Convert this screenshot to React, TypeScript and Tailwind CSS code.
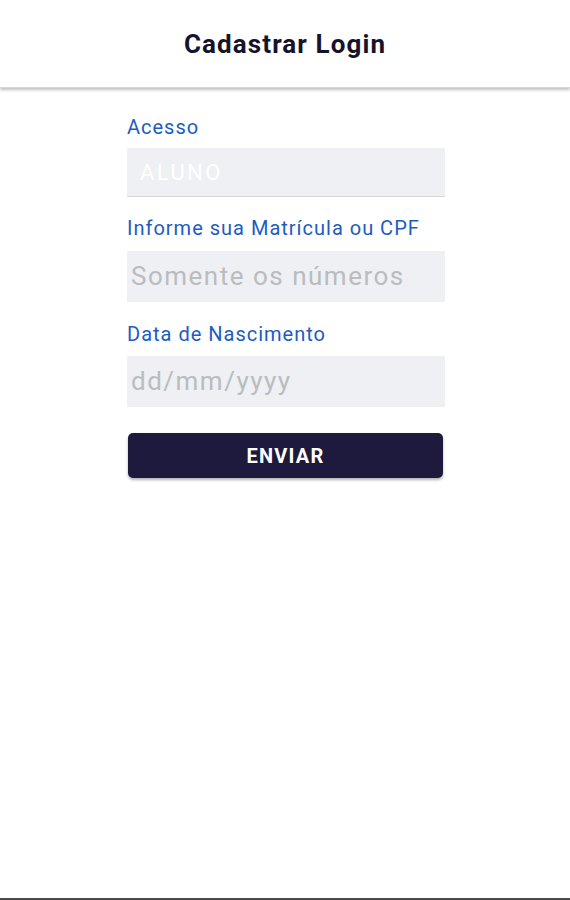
export default function App() {
  const font = { fontFamily: 'Roboto, "Noto Sans", sans-serif' };
  return (
    <div className="w-[570px] h-[900px] bg-white flex flex-col relative" style={font}>
      <header className="h-[88px] flex items-center justify-center bg-white shadow-[0_2px_3px_rgba(0,0,0,0.25)] border-b border-[#d6d6d6] z-10">
        <h1 className="text-[26px] font-bold text-[#15142b] tracking-[1.1px] mt-[2px]">Cadastrar Login</h1>
      </header>
      <main className="flex-1 flex flex-col px-[127px] pt-[25px]">
        <label className="text-[20px] leading-[28px] tracking-[1px] text-[#1c5cc2]">Acesso</label>
        <div className="mt-[7px] h-[49px] w-[318px] bg-[#eff0f3] border-b border-[#d4d6d9] flex items-center px-[13px]">
          <span className="text-[22px] tracking-[2.4px] text-white">ALUNO</span>
        </div>
        <label className="mt-[17px] text-[20px] leading-[28px] tracking-[1px] text-[#1c5cc2]">Informe sua Matrícula ou CPF</label>
        <div className="mt-[9px] h-[51px] w-[318px] bg-[#eff0f3] flex items-center px-[4px]">
          <span className="text-[26px] tracking-[1.5px] text-[#b9bcc1]">Somente os números</span>
        </div>
        <label className="mt-[18px] text-[20px] leading-[28px] tracking-[1px] text-[#1c5cc2]">Data de Nascimento</label>
        <div className="mt-[8px] h-[51px] w-[318px] bg-[#eff0f3] flex items-center px-[4px]">
          <span className="text-[26px] tracking-[1.5px] text-[#b9bcc1]">dd/mm/yyyy</span>
        </div>
        <button className="mt-[26px] ml-[1px] h-[45px] w-[315px] bg-[#1e1a3e] rounded-[5px] shadow-[0_2px_3px_rgba(0,0,0,0.3)] text-white font-bold text-[20px] tracking-[1.2px]">
          ENVIAR
        </button>
      </main>
      <div className="h-[2px] bg-[#4a4a4a]" />
    </div>
  );
}
